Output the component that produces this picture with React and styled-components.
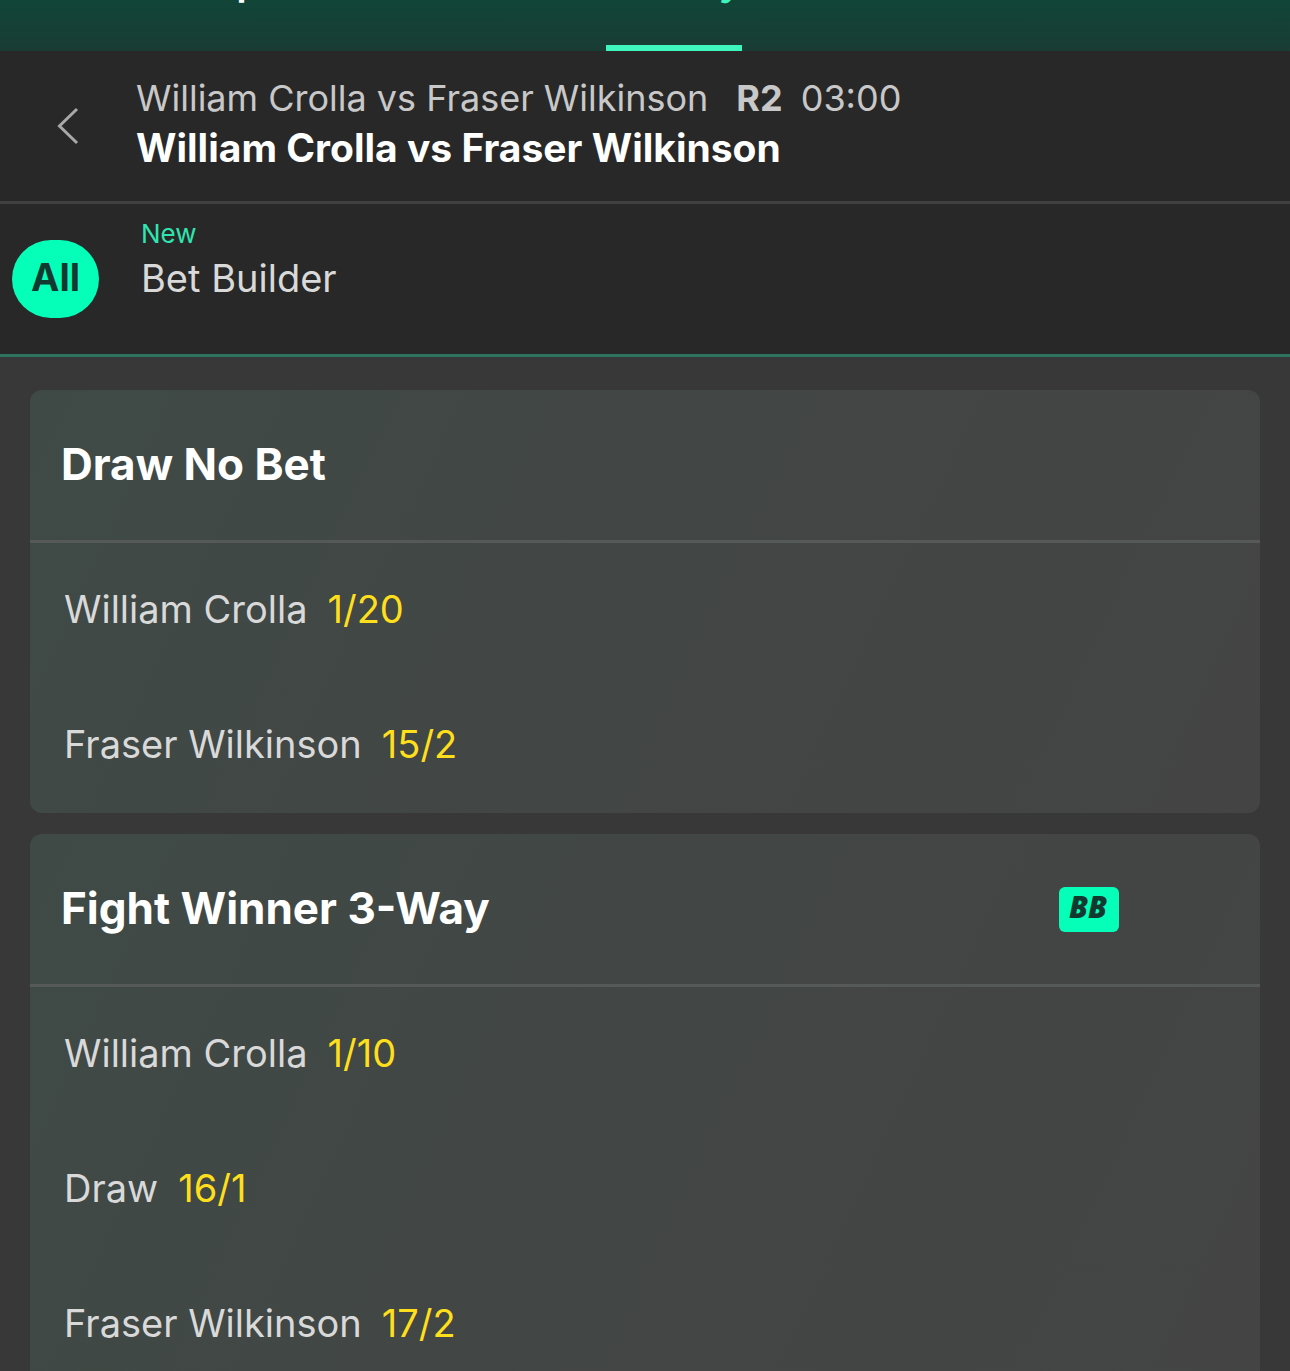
import React, { Component } from 'react'
import styled, { createGlobalStyle } from 'styled-components'


const markets = [
    {
        name: 'Draw No Bet',
        betBuilder: false,
        selections: [
            { name: 'William Crolla', odds: '1/20' },
            { name: 'Fraser Wilkinson', odds: '15/2' },
        ],
    },
    {
        name: 'Fight Winner 3-Way',
        betBuilder: true,
        selections: [
            { name: 'William Crolla', odds: '1/10' },
            { name: 'Draw', odds: '16/1' },
            { name: 'Fraser Wilkinson', odds: '17/2' },
        ],
    },
]


class Market extends Component {
    render() {
        const { name, betBuilder, selections } = this.props.market
        return (
            <MarketCard>
                <MarketHeader>
                    <MarketTitle>{name}</MarketTitle>
                    {betBuilder && <BetBuilderBadge>BB</BetBuilderBadge>}
                </MarketHeader>
                {selections.map(item => (
                    <Selection key={item.name} type="button">
                        {item.name}
                        <Odds>{item.odds}</Odds>
                    </Selection>
                ))}
            </MarketCard>
        )
    }
}


export default class App extends Component {
    render() {
        return (
            <>
                <GlobalStyle />
                <TopBar>
                    <TopTab href="#sports">All Sports</TopTab>
                    <TopTab href="#inplay" $active>In-Play</TopTab>
                </TopBar>

                <MatchHeader>
                    <BackButton type="button" aria-label="Back">
                        <svg width="24" height="38" viewBox="0 0 24 38" fill="none">
                            <path d="M21 2L3.5 19L21 36" stroke="#a8a8a8" strokeWidth="3" />
                        </svg>
                    </BackButton>
                    <MatchText>
                        <MatchInfo>
                            William Crolla vs Fraser Wilkinson
                            <Round>R2</Round>
                            <span>03:00</span>
                        </MatchInfo>
                        <MatchTitle>William Crolla vs Fraser Wilkinson</MatchTitle>
                    </MatchText>
                </MatchHeader>

                <FilterBar>
                    <AllButton type="button">All</AllButton>
                    <FilterButton type="button">
                        <NewLabel>New</NewLabel>
                        Bet Builder
                    </FilterButton>
                </FilterBar>

                <Markets>
                    {markets.map(market => (
                        <Market key={market.name} market={market} />
                    ))}
                </Markets>
            </>
        )
    }
}


const GlobalStyle = createGlobalStyle`
* {
    box-sizing: border-box;
}
html {
    scrollbar-width: none;
}
body {
    margin: 0;
    background: #383838;
    color: #d9d9d9;
    font-family: Inter, "Liberation Sans", sans-serif;
    font-size: 38px;
}
button {
    border: 0;
    padding: 0;
    background: none;
    color: inherit;
    font: inherit;
    text-align: left;
    cursor: pointer;
}
`

const TopBar = styled.nav`
display: flex;
align-items: flex-end;
gap: 268px;
height: 51px;
padding-left: 150px;
overflow: hidden;
background: linear-gradient(#114538, #193c34);
`

const TopTab = styled.a`
flex: none;
padding-bottom: 40px;
border-bottom: 6px solid ${props => (props.$active ? '#3df5bd' : 'transparent')};
color: ${props => (props.$active ? '#3df5bd' : '#ffffff')};
font-size: 40px;
font-weight: 600;
line-height: 48px;
text-decoration: none;
`

const MatchHeader = styled.header`
display: flex;
align-items: center;
height: 153px;
border-bottom: 3px solid #404040;
background: #282828;
`

const BackButton = styled.button`
display: flex;
justify-content: center;
flex: none;
width: 136px;
`

const MatchText = styled.div`
padding-bottom: 6px;
`

const MatchInfo = styled.div`
display: flex;
color: #c8c8c8;
font-size: 36px;
line-height: 50px;
`

const Round = styled.b`
margin: 0 18px 0 28px;
`

const MatchTitle = styled.h1`
margin: 0;
color: #ffffff;
font-size: 39px;
font-weight: 700;
line-height: 50px;
`

const FilterBar = styled.div`
display: flex;
align-items: center;
gap: 42px;
height: 153px;
padding-left: 12px;
border-bottom: 3px solid #2c745e;
background: #282828;
`

const AllButton = styled.button`
width: 87px;
height: 78px;
border-radius: 39px;
&& {
    padding-bottom: 4px;
    background: #05ffb9;
    color: #12392f;
    font-weight: 700;
    text-align: center;
}
`

const FilterButton = styled.button`
&& {
    padding-bottom: 42px;
    line-height: 48px;
}
`

const NewLabel = styled.span`
display: block;
color: #2fe5b0;
font-size: 26px;
line-height: 40px;
`

const Markets = styled.main`
display: flex;
flex-direction: column;
gap: 21px;
padding: 33px 30px;
`

const MarketCard = styled.section`
display: flex;
flex-direction: column;
border-radius: 12px;
background: linear-gradient(115deg, #3f4a46, #424644 50%, #444444);
`

const MarketHeader = styled.div`
display: flex;
align-items: center;
justify-content: space-between;
height: 153px;
padding: 0 141px 0 31px;
border-bottom: 3px solid #555a58;
`

const MarketTitle = styled.h2`
margin: 0;
padding-bottom: 2px;
color: #ffffff;
font-size: 44px;
font-weight: 700;
`

const BetBuilderBadge = styled.span`
width: 60px;
height: 45px;
padding-right: 2px;
border-radius: 6px;
background: #05ffb9;
color: #12392f;
font-family: "Open Sans", "Noto Sans", sans-serif;
font-size: 30px;
font-style: italic;
font-weight: 800;
line-height: 40px;
text-align: center;
`

const Selection = styled.button`
display: flex;
align-items: center;
gap: 20px;
height: 135px;
&& {
    padding: 0 0 3px 34px;
}
`

const Odds = styled.span`
color: #ffdf1b;
`
